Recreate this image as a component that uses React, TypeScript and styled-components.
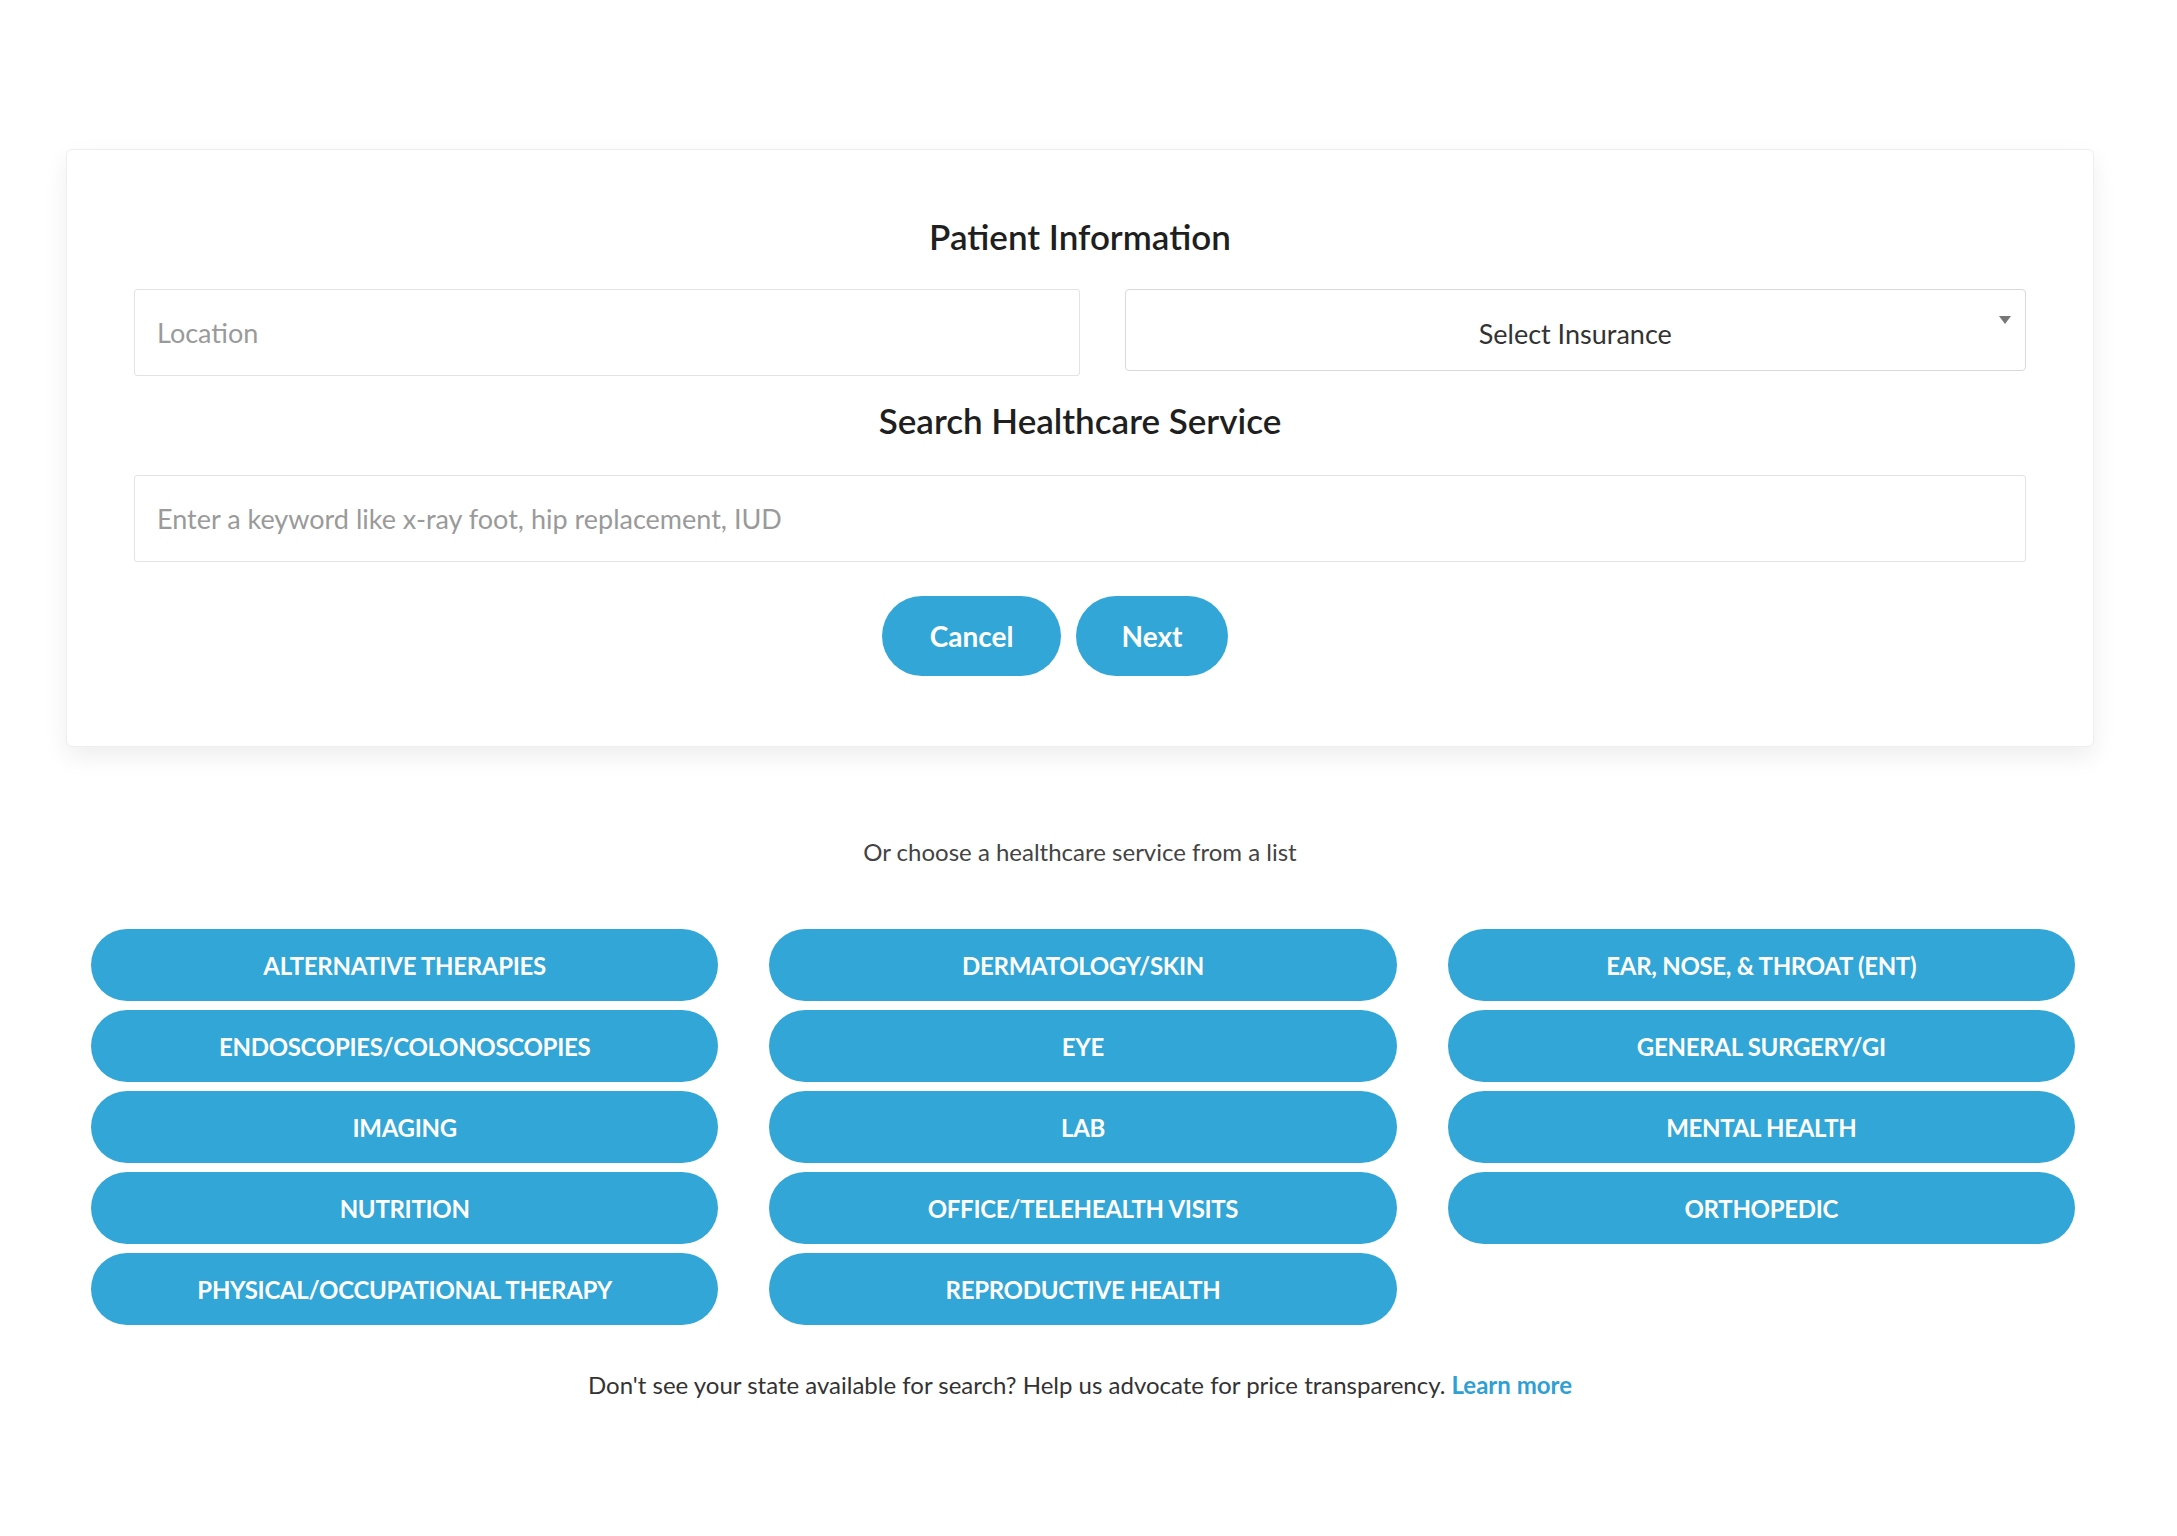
import React from "react";
import styled, { createGlobalStyle } from "styled-components";

const Global = createGlobalStyle`
  body { margin: 0; background: #fff; font-family: "Lato", "Noto Sans", sans-serif; color: #222; }
`;

const Page = styled.div`
  padding: 149px 83px 0 66px;
`;

const Card = styled.div`
  background: #fff;
  border: 1px solid #eee;
  border-radius: 6px;
  box-shadow: 0 10px 24px rgba(0,0,0,0.07);
  padding: 54px 67px 70px 67px;
  display: flex;
  flex-direction: column;
  align-items: stretch;
`;

const Title = styled.h2<{ gap?: number }>`
  margin: ${p => p.gap ?? 0}px 0 0;
  text-align: center;
  font-size: 35px;
  font-weight: 600;
  color: #1f1f1f;
  line-height: 64px;
`;

const Row = styled.div`
  display: flex;
  gap: 45px;
  align-items: flex-start;
  margin-top: 21px;
`;

const Input = styled.input`
  flex: 1;
  height: 87px;
  box-sizing: border-box;
  border: 1px solid #e3e3e6;
  border-radius: 3px;
  padding: 0 22px;
  font-family: "Lato", sans-serif;
  font-size: 27px;
  color: #333;
  width: 100%;
  &::placeholder { color: #9a9a9a; }
`;

const Select = styled.div`
  flex: 1;
  position: relative;
  height: 82px;
  box-sizing: border-box;
  border: 1px solid #d9d9d9;
  border-radius: 4px;
  display: flex;
  align-items: center;
  justify-content: center;
  padding-top: 6px;
  font-size: 27px;
  color: #333;
`;

const Caret = styled.span`
  position: absolute;
  right: 14px;
  top: 26px;
  width: 0; height: 0;
  border-left: 6px solid transparent;
  border-right: 6px solid transparent;
  border-top: 8px solid #777;
`;

const SearchWrap = styled.div`
  margin-top: 23px;
  display: flex;
`;

const Buttons = styled.div`
  display: flex;
  justify-content: center;
  gap: 15px;
  margin: 34px 50px 0 0;
`;

const Pill = styled.button<{ w: number }>`
  width: ${p => p.w}px;
  height: 80px;
  border: none;
  border-radius: 40px;
  background: #31a6d7;
  color: #fff;
  font-family: "Lato", sans-serif;
  font-weight: 700;
  font-size: 28px;
`;

const Lead = styled.p`
  margin: 90px 0 0;
  text-align: center;
  font-size: 24px;
  color: #444;
`;

const Grid = styled.div`
  margin: 63px 19px 0 25px;
  display: grid;
  grid-template-columns: repeat(3, 1fr);
  column-gap: 51px;
  row-gap: 9px;
`;

const Service = styled.button`
  height: 72px;
  border: none;
  border-radius: 36px;
  background: #31a6d7;
  color: #fff;
  font-family: "Lato", sans-serif;
  font-weight: 700;
  font-size: 24px;
  text-transform: uppercase;
  letter-spacing: -0.3px;
`;

const Foot = styled.p`
  margin: 45px 0 0;
  text-align: center;
  font-size: 24px;
  color: #333;
  a { color: #2f9fd4; font-weight: 700; text-decoration: none; }
`;

const services = [
  "Alternative Therapies", "Dermatology/Skin", "Ear, Nose, & Throat (ENT)",
  "Endoscopies/Colonoscopies", "Eye", "General Surgery/GI",
  "Imaging", "Lab", "Mental Health",
  "Nutrition", "Office/Telehealth Visits", "Orthopedic",
  "Physical/Occupational Therapy", "Reproductive Health",
];

export default function App() {
  return (
    <Page>
      <Global />
      <Card>
        <Title>Patient Information</Title>
        <Row>
          <Input placeholder="Location" />
          <Select>Select Insurance<Caret /></Select>
        </Row>
        <Title gap={12}>Search Healthcare Service</Title>
        <SearchWrap>
          <Input placeholder="Enter a keyword like x-ray foot, hip replacement, IUD" />
        </SearchWrap>
        <Buttons>
          <Pill w={179}>Cancel</Pill>
          <Pill w={152}>Next</Pill>
        </Buttons>
      </Card>
      <Lead>Or choose a healthcare service from a list</Lead>
      <Grid>
        {services.map(s => <Service key={s}>{s}</Service>)}
      </Grid>
      <Foot>Don't see your state available for search? Help us advocate for price transparency. <a href="#">Learn more</a></Foot>
    </Page>
  );
}
